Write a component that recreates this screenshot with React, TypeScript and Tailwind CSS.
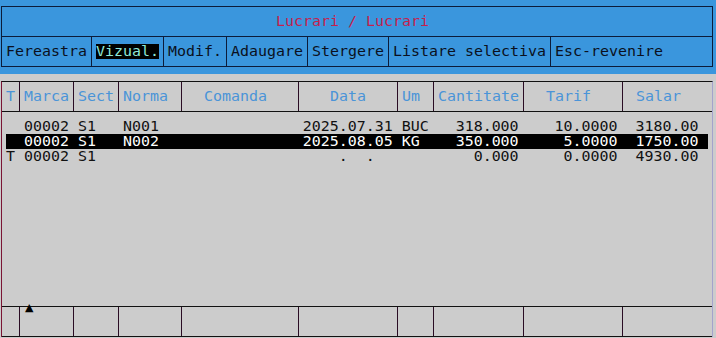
import type { ReactNode } from "react";

const mono = "font-['DejaVu_Sans_Mono',monospace] text-[14.95px] leading-[15px]";

// build a fixed-width line of 78 cells from [column, text] pairs
function line(parts: [number, string][]) {
  const cells = Array(78).fill(" ");
  for (const [col, text] of parts) {
    for (let i = 0; i < text.length; i++) cells[col + i] = text[i];
  }
  return cells.join("");
}

const rows = [
  line([[2, "00002"], [8, "S1"], [13, "N001"], [33, "2025.07.31"], [44, "BUC"], [50, "318.000"], [61, "10.0000"], [70, "3180.00"]]),
  line([[2, "00002"], [8, "S1"], [13, "N002"], [33, "2025.08.05"], [44, "KG"], [50, "350.000"], [62, "5.0000"], [70, "1750.00"]]),
  line([[0, "T"], [2, "00002"], [8, "S1"], [37, "."], [40, "."], [52, "0.000"], [62, "0.0000"], [70, "4930.00"]]),
];

const menu = [
  { label: "Fereastra", w: "w-[90px]" },
  { label: "Vizual.", w: "w-[72px]", active: true },
  { label: "Modif.", w: "w-[63px]" },
  { label: "Adaugare", w: "w-[81px]" },
  { label: "Stergere", w: "w-[81px]" },
  { label: "Listare selectiva", w: "w-[162px]" },
  { label: "Esc-revenire", w: "flex-1", last: true },
];

const columns = [
  { label: "T", w: "w-[18px]", pl: "pl-[4px]" },
  { label: "Marca", w: "w-[54px]", pl: "pl-[4px]" },
  { label: "Sect", w: "w-[45px]", pl: "pl-[4px]" },
  { label: "Norma", w: "w-[63px]", pl: "pl-[4px]" },
  { label: "Comanda", w: "w-[117px]", pl: "pl-[22px]" },
  { label: "Data", w: "w-[99px]", pl: "pl-[31px]" },
  { label: "Um", w: "w-[36px]", pl: "pl-[4px]" },
  { label: "Cantitate", w: "w-[90px]", pl: "pl-[4px]" },
  { label: "Tarif", w: "w-[99px]", pl: "pl-[22px]" },
  { label: "Salar", w: "flex-1", pl: "pl-[13px]", last: true },
];

function Cell({ w, last, children }: { w: string; last?: boolean; children?: ReactNode }) {
  return (
    <div className={`${w} h-full flex items-center ${last ? "" : "border-r border-[#2a0c24]"}`}>
      {children}
    </div>
  );
}

export default function App() {
  return (
    <div className={`w-[716px] h-[338px] overflow-hidden bg-[#cccccc] ${mono}`}>
      {/* window header */}
      <div className="bg-[#3a96dd] h-[74px] pt-[6px] pl-[1px] pr-[3px]">
        <div className="border border-[#0c1c3a] w-[712px]">
          <div className="h-[29px] flex items-center pl-[274px] text-[#c41e4e]">
            Lucrari / Lucrari
          </div>
          <div className="h-[30px] border-t border-[#0c1c3a] flex text-[#0a1020]">
            {menu.map((m) => (
              <div
                key={m.label}
                className={`${m.w} flex items-center pl-[4px] ${m.last ? "" : "border-r border-[#0c1c3a]"}`}
              >
                <span className={`whitespace-pre ${m.active ? "bg-black text-[#8ee8d8]" : ""}`}>{m.label}</span>
              </div>
            ))}
          </div>
        </div>
      </div>

      {/* table */}
      <div className="pt-[7px] pl-[1px]">
        <div className="relative w-[712px] border-l border-l-[#7a1434] border-r border-r-[#a4a2cc] border-t border-t-[#111111]">
          <div className="h-[30px] flex border-b border-[#111111] text-[#4a94d8]">
            {columns.map((c) => (
              <Cell key={c.label} w={c.w} last={c.last}>
                <span className={c.pl}>{c.label}</span>
              </Cell>
            ))}
          </div>

          <div className="h-[194px] pt-[7px] pl-[4px] text-[#111111]">
            {rows.map((r, i) => (
              <div
                key={i}
                className={`h-[15px] w-[702px] whitespace-pre ${i === 1 ? "bg-black text-white" : ""}`}
              >
                {r}
              </div>
            ))}
          </div>

          <div className="h-[31px] flex border-t border-b border-[#111111]">
            {columns.map((c) => (
              <Cell key={c.label} w={c.w} last={c.last} />
            ))}
          </div>

          <span className="absolute left-[23px] top-[220px] text-[11px] leading-[11px] text-black font-['DejaVu_Sans',sans-serif]">
            ▲
          </span>
        </div>
      </div>
    </div>
  );
}
